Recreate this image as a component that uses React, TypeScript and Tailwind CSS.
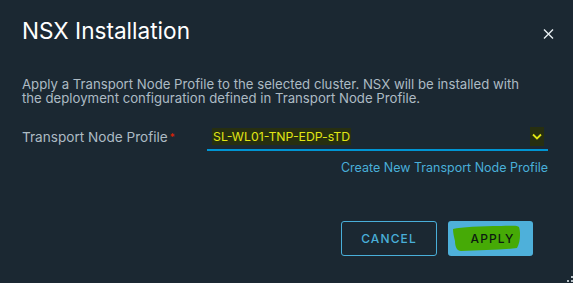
import React from "react";

export default function App() {
  return (
    <div className="relative w-[573px] h-[283px] bg-[#1b2832] overflow-hidden" style={{ fontFamily: "Inter, 'Liberation Sans', sans-serif" }}>
      <div className="flex items-start justify-between pl-[22px] pr-[19px] pt-[16px]">
        <h1 className="text-[22.6px] leading-[30px] text-white">NSX Installation</h1>
        <svg width="11" height="10" viewBox="0 0 11 10" className="mt-[13px]">
          <path d="M1 0.5 L10 9.5 M10 0.5 L1 9.5" stroke="#e8eef2" strokeWidth="1.4" />
        </svg>
      </div>
      <p className="mt-[31px] px-[22px] text-[13.2px] leading-[14px] text-[#adbbc4] whitespace-nowrap">
        Apply a Transport Node Profile to the selected cluster. NSX will be installed with
        <br />
        the deployment configuration defined in Transport Node Profile.
      </p>
      <div className="mt-[22px] flex items-end pl-[22px] pr-[25px]">
        <div className="w-[185px] pb-[6px] text-[13.6px] leading-[16px] text-[#adbbc4] whitespace-nowrap">
          Transport Node Profile<span className="text-[#e12200] align-top text-[10px] ml-[2px]">*</span>
        </div>
        <div className="flex-1 flex items-center justify-between border-b-2 border-[#0095d3] pl-[5px] pr-[4px] pb-[3px]">
          <span className="bg-[#272f10] text-[#e0e614] text-[12.3px] leading-[17px] px-[1px]">SL-WL01-TNP-EDP-sTD</span>
          <span className="bg-[#272f10] w-[14px] h-[19px] flex items-center justify-center">
            <svg width="10" height="7" viewBox="0 0 10 7">
              <path d="M1 1.5 L5 5.5 L9 1.5" stroke="#e0e614" strokeWidth="1.8" fill="none" />
            </svg>
          </span>
        </div>
      </div>
      <div className="mt-[9px] flex justify-end pr-[25px]">
        <span className="text-[12.5px] leading-[16px] text-[#49afd9]">Create New Transport Node Profile</span>
      </div>
      <div className="mt-[45px] flex justify-end gap-[11px] pr-[40px]">
        <button className="w-[96px] h-[35px] rounded-[3px] border border-[#49afd9] text-[#49afd9] text-[12px] font-medium tracking-[1.1px]">
          CANCEL
        </button>
        <button className="relative w-[85px] h-[35px] rounded-[3px] bg-[#4eb0da] text-[#0c1a10] text-[12px] font-medium tracking-[1.1px]">
          <svg className="absolute left-[3px] top-[2px]" width="70" height="30" viewBox="0 0 70 30">
            <path d="M2 6 C10 4 30 3 50 3 C60 3 66 2 68 4 C70 10 69 20 66 25 C50 27 30 27 10 28 C6 28 4 24 4 18 C3 14 2 10 2 6 Z" fill="#46aa06" />
          </svg>
          <span className="relative pl-[4px]">APPLY</span>
        </button>
      </div>
      <div className="absolute right-0 bottom-[5px] w-[2px] h-[2px] bg-[#b8c2c8]" />
      <div className="absolute right-0 bottom-[1px] w-[2px] h-[2px] bg-[#b8c2c8]" />
      <div className="absolute right-[4px] bottom-[1px] w-[2px] h-[2px] bg-[#b8c2c8]" />
    </div>
  );
}
